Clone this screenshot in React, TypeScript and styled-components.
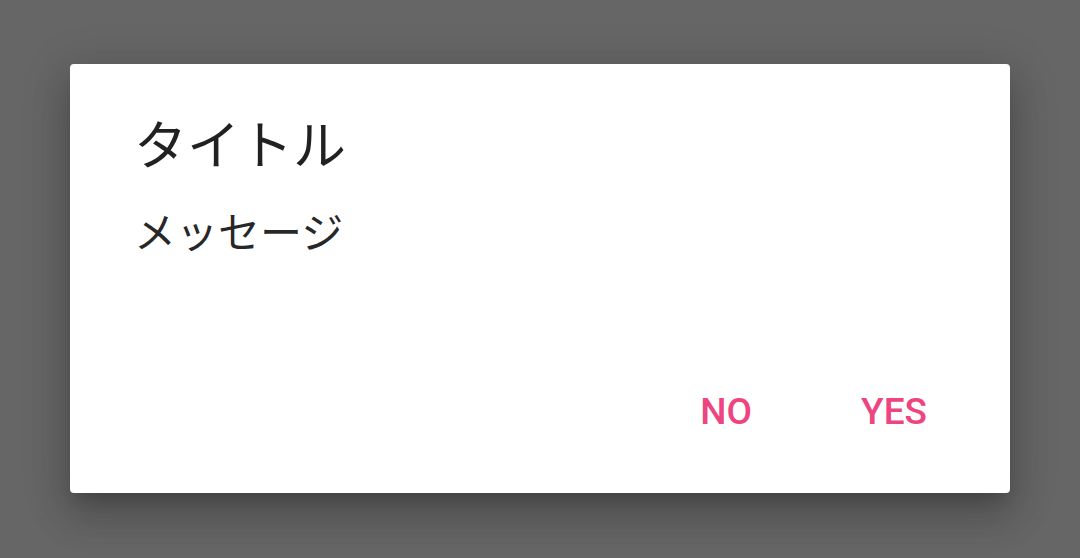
import React from "react";
import styled, { createGlobalStyle } from "styled-components";

const Global = createGlobalStyle`
  html, body {
    margin: 0;
    padding: 0;
    background: #666666;
    width: 1080px;
    height: 558px;
    overflow: hidden;
  }
`;

const Screen = styled.div`
  width: 1080px;
  height: 558px;
  box-sizing: border-box;
  padding: 64px 70px 0 70px;
  display: flex;
  flex-direction: column;
  align-items: flex-start;
`;

const Dialog = styled.div`
  width: 940px;
  height: 429px;
  background: #ffffff;
  border-radius: 4px;
  box-sizing: border-box;
  display: flex;
  flex-direction: column;
  padding: 43px 0 33px 0;
  box-shadow: 0 11px 15px -7px rgba(0, 0, 0, 0.2),
    0 24px 38px 3px rgba(0, 0, 0, 0.14), 0 9px 46px 8px rgba(0, 0, 0, 0.12);
`;

const Title = styled.div`
  font-family: "Noto Sans CJK JP", "Noto Sans", sans-serif;
  font-size: 53px;
  line-height: 70px;
  height: 70px;
  color: rgba(0, 0, 0, 0.87);
  padding: 0 64px;
  white-space: nowrap;
`;

const Message = styled.div`
  font-family: "Noto Sans CJK JP", "Noto Sans", sans-serif;
  font-size: 42px;
  line-height: 56px;
  height: 56px;
  margin-top: 25px;
  color: rgba(0, 0, 0, 0.85);
  padding: 0 64px;
  white-space: nowrap;
`;

const Spacer = styled.div`
  flex: 1;
`;

const Actions = styled.div`
  display: flex;
  justify-content: flex-end;
  padding-right: 32px;
`;

const ActionButton = styled.button`
  all: unset;
  min-width: 168px;
  height: 96px;
  line-height: 96px;
  text-align: center;
  font-family: Roboto, "Liberation Sans", sans-serif;
  font-weight: 500;
  font-size: 37px;
  color: #ee447f;
  text-transform: uppercase;
  cursor: pointer;
`;

export default function App() {
  return (
    <>
      <Global />
      <Screen>
        <Dialog>
          <Title>タイトル</Title>
          <Message>メッセージ</Message>
          <Spacer />
          <Actions>
            <ActionButton>NO</ActionButton>
            <ActionButton>YES</ActionButton>
          </Actions>
        </Dialog>
      </Screen>
    </>
  );
}
